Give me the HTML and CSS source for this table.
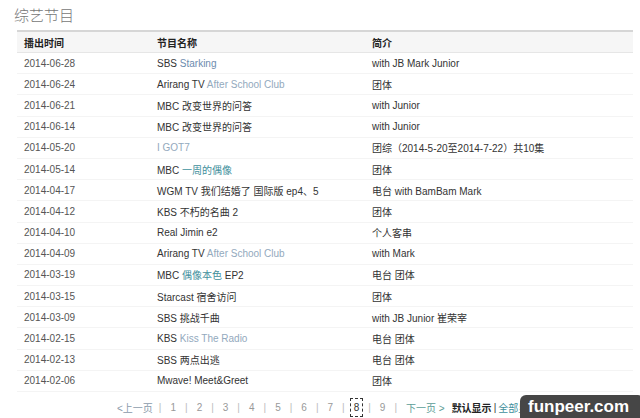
FILE: index.html
```html
<!DOCTYPE html>
<html lang="zh-CN">
<head>
    <meta charset="UTF-8">
    <title>综艺节目</title>
    <link rel="stylesheet" href="styles.css">
</head>
<body>
    <div class="page">
        <h2 class="title">综艺节目</h2>
        <table class="shows">
            <colgroup>
                <col class="col-date">
                <col class="col-name">
                <col class="col-info">
            </colgroup>
            <thead>
                <tr><th>播出时间</th><th>节目名称</th><th>简介</th></tr>
            </thead>
            <tbody>
                <tr><td>2014-06-28</td><td>SBS <a class="link">Starking</a></td><td>with JB Mark Junior</td></tr>
                <tr><td>2014-06-24</td><td>Arirang TV <a class="link light">After School Club</a></td><td>团体</td></tr>
                <tr><td>2014-06-21</td><td>MBC 改变世界的问答</td><td>with Junior</td></tr>
                <tr><td>2014-06-14</td><td>MBC 改变世界的问答</td><td>with Junior</td></tr>
                <tr><td>2014-05-20</td><td><a class="link light">I GOT7</a></td><td>团综（2014-5-20至2014-7-22）共10集</td></tr>
                <tr><td>2014-05-14</td><td>MBC <a class="link teal">一周的偶像</a></td><td>团体</td></tr>
                <tr><td>2014-04-17</td><td>WGM TV 我们结婚了 国际版 ep4、5</td><td>电台 with BamBam Mark</td></tr>
                <tr><td>2014-04-12</td><td>KBS 不朽的名曲 2</td><td>团体</td></tr>
                <tr><td>2014-04-10</td><td>Real Jimin e2</td><td>个人客串</td></tr>
                <tr><td>2014-04-09</td><td>Arirang TV <a class="link light">After School Club</a></td><td>with Mark</td></tr>
                <tr><td>2014-03-19</td><td>MBC <a class="link teal">偶像本色</a> EP2</td><td>电台 团体</td></tr>
                <tr><td>2014-03-15</td><td>Starcast 宿舍访问</td><td>团体</td></tr>
                <tr><td>2014-03-09</td><td>SBS 挑战千曲</td><td>with JB Junior 崔荣宰</td></tr>
                <tr><td>2014-02-15</td><td>KBS <a class="link light">Kiss The Radio</a></td><td>电台 团体</td></tr>
                <tr><td>2014-02-13</td><td>SBS 两点出逃</td><td>电台 团体</td></tr>
                <tr><td>2014-02-06</td><td>Mwave! Meet&amp;Greet</td><td>团体</td></tr>
            </tbody>
        </table>
        <div class="pager">
            <a class="prev">&lt;上一页</a>
            <span class="sep">|</span><a>1</a>
            <span class="sep">|</span><a>2</a>
            <span class="sep">|</span><a>3</a>
            <span class="sep">|</span><a>4</a>
            <span class="sep">|</span><a>5</a>
            <span class="sep">|</span><a>6</a>
            <span class="sep">|</span><a>7</a>
            <span class="sep">|</span><a class="current">8</a>
            <span class="sep">|</span><a>9</a>
            <span class="sep">|</span><a class="next">下一页 &gt;</a>
            <b class="mode">默认显示</b><span class="sep tight">|</span><a class="all">全部显示</a>
        </div>
    </div>
    <div class="watermark">funpeer.com</div>
</body>
</html>
```

FILE: styles.css
```css
body {
    margin: 0;
    background: #fff;
    font-family: 'Liberation Sans', Arial, 'Noto Sans CJK SC', sans-serif;
    font-size: 10px;
    color: #333;
    overflow: hidden;
}
.page {
    padding: 4px 7px 0 17px;
}
.title {
    margin: 0 0 4px -3px;
    font-family: 'Noto Sans CJK SC', sans-serif;
    font-size: 15px;
    font-weight: 300;
    line-height: 22px;
    color: #777;
}
.shows {
    width: 616px;
    border-collapse: collapse;
    table-layout: fixed;
}
.col-date { width: 133px; }
.col-name { width: 215px; }
.shows th {
    height: 20px;
    padding: 0 7px;
    text-align: left;
    font-family: 'Noto Sans CJK SC', sans-serif;
    font-weight: 700;
    color: #222;
    background: #f6f6f6;
    border-top: 2px solid #d6d6d6;
    border-bottom: 1px solid #e6e6e6;
}
.shows td {
    height: 20.2px;
    padding: 0 7px;
    border-bottom: 1px solid #f4f4f4;
    white-space: nowrap;
}
.shows td:first-child {
    color: #555;
}
.link {
    color: #6d8cae;
}
.link.light {
    color: #93a9bd;
}
.link.teal {
    color: #3f8f9c;
}
.pager {
    display: flex;
    align-items: center;
    margin: 3px 0 0 100px;
    height: 24px;
    color: #999;
    white-space: nowrap;
}
.pager a {
    padding: 0 3px;
}
.pager .sep {
    color: #bbb;
    margin: 0 6px;
}
.pager .sep.tight {
    margin: 0 2px;
    color: #333;
}
.pager .prev {
    color: #8a9aaa;
    padding: 0;
}
.pager .current {
    border: 1px dashed #333;
    color: #333;
    padding: 3px 3px;
    margin: 0 -1px;
}
.pager .next {
    color: #5b9c96;
    margin-right: 4px;
}
.pager .mode {
    font-family: 'Noto Sans CJK SC', sans-serif;
    font-weight: 700;
    color: #222;
}
.pager .all {
    color: #3f8f9c;
    padding: 0;
}
.watermark {
    position: absolute;
    left: 520px;
    top: 395px;
    width: 124px;
    height: 26px;
    background: rgb(70, 70, 70);
    border-radius: 6px 6px 0 0;
    color: #fff;
    font-family: 'Liberation Sans', Arial, sans-serif;
    font-weight: 700;
    font-size: 17px;
    line-height: 24px;
    padding-left: 8px;
    box-sizing: border-box;
}
```
